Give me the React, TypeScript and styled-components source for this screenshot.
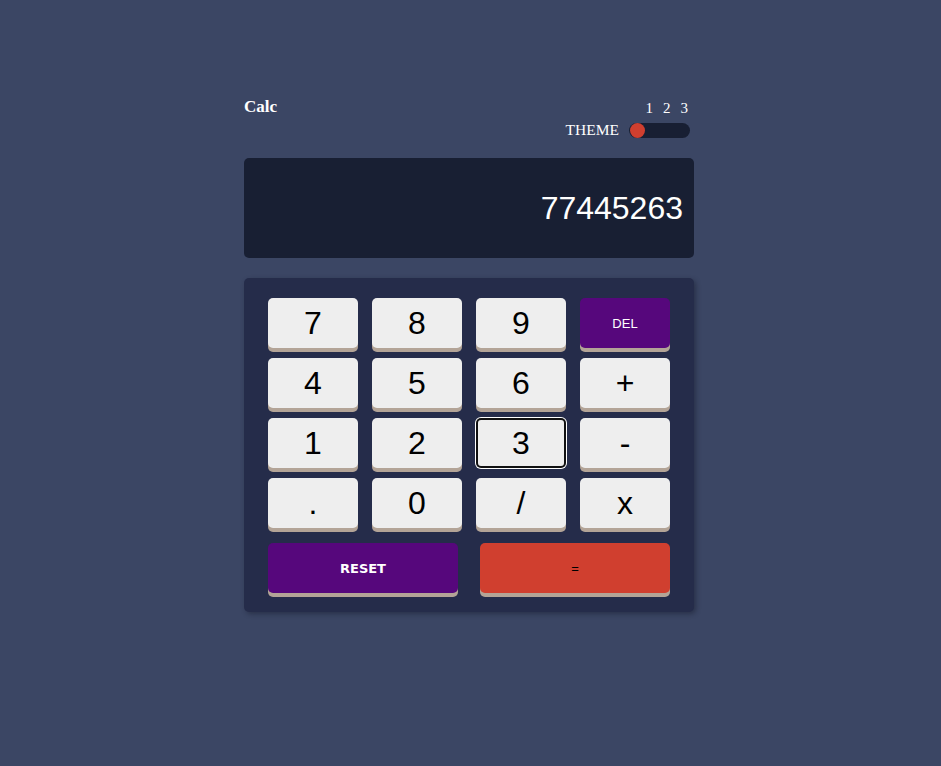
import React, { useState } from 'react';
import styled, { createGlobalStyle } from 'styled-components';

const GlobalStyle = createGlobalStyle`
  html, body {
    margin: 0;
    padding: 0;
    background-color: #3b4664;
    min-height: 100%;
  }
`;

const Page = styled.div`
  min-height: 766px;
  padding: 97px 3px 0 0;
  box-sizing: border-box;
`;

const CalcContainer = styled.div`
  width: 450px;
  margin: 0 auto;
`;

const Header = styled.div`
  display: flex;
  justify-content: space-between;
  align-items: flex-start;
  margin-bottom: 19px;
`;

const Title = styled.h1`
  margin: 0;
  font-family: 'Liberation Serif', 'Times New Roman', serif;
  font-size: 17px;
  font-weight: bold;
  color: #ffffff;
  line-height: 20px;
`;

const ThemeBox = styled.div`
  display: flex;
  flex-direction: column;
  align-items: flex-end;
  padding-right: 4px;
  font-family: 'Liberation Serif', 'Times New Roman', serif;
  color: #ffffff;
  font-size: 15px;
`;

const ThemeNumbers = styled.div`
  display: flex;
  gap: 10px;
  padding-right: 2px;
  line-height: 20px;
  margin-top: 1px;
`;

const ThemeRow = styled.div`
  display: flex;
  align-items: center;
  gap: 10px;
  margin-top: 3px;
`;

const ThemeLabel = styled.span`
  font-size: 15.5px;
`;

const Toggle = styled.div`
  width: 61px;
  height: 15px;
  border-radius: 8px;
  background-color: #181f33;
  display: flex;
  align-items: center;
  padding: 0 1px;
  box-sizing: border-box;
`;

const Knob = styled.div`
  width: 15px;
  height: 15px;
  border-radius: 50%;
  background-color: #d03f2f;
`;

const Display = styled.div`
  height: 100px;
  background-color: #181f33;
  border-radius: 5px;
  display: flex;
  align-items: center;
  justify-content: flex-end;
  padding: 0 11px;
  font-family: 'Liberation Sans', Arial, sans-serif;
  font-size: 32px;
  color: #ffffff;
  margin-bottom: 20px;
`;

const Keypad = styled.div`
  background-color: #252c4a;
  border-radius: 5px;
  padding: 20px 24px 19px;
  box-shadow: 2px 2px 5px rgba(20, 24, 40, 0.45);
`;

const KeyGrid = styled.div`
  display: grid;
  grid-template-columns: repeat(4, 90px);
  column-gap: 14px;
  row-gap: 10px;
`;

const BottomRow = styled.div`
  display: flex;
  justify-content: space-between;
  margin-top: 15px;
`;

type KeyVariant = 'number' | 'del' | 'reset' | 'equals';

const keyColors: Record<KeyVariant, { bg: string; color: string }> = {
  number: { bg: '#eeeeee', color: '#000000' },
  del: { bg: '#56077c', color: '#ffffff' },
  reset: { bg: '#56077c', color: '#ffffff' },
  equals: { bg: '#d03f2f', color: '#000000' },
};

const Key = styled.button<{ $variant: KeyVariant; $wide?: boolean; $focused?: boolean }>`
  width: ${(p) => (p.$wide ? '190px' : '90px')};
  height: 50px;
  border: none;
  border-radius: 5px;
  cursor: pointer;
  background-color: ${(p) => keyColors[p.$variant].bg};
  color: ${(p) => keyColors[p.$variant].color};
  box-shadow: ${(p) =>
    p.$focused ? '0 0 0 1px #ffffff, inset 0 0 0 2px #111111' : '0 4px 0 #b3a497'};
  font-family: ${(p) =>
    p.$variant === 'reset'
      ? "'DejaVu Sans', Verdana, sans-serif"
      : "'Liberation Sans', Arial, sans-serif"};
  font-size: ${(p) => (p.$variant === 'number' ? '32px' : '13px')};
  font-weight: ${(p) => (p.$variant === 'reset' ? 'bold' : 'normal')};
  padding: 0;
  outline: none;
  display: flex;
  align-items: center;
  justify-content: center;
`;

const keys: { label: string; variant: KeyVariant }[] = [
  { label: '7', variant: 'number' },
  { label: '8', variant: 'number' },
  { label: '9', variant: 'number' },
  { label: 'DEL', variant: 'del' },
  { label: '4', variant: 'number' },
  { label: '5', variant: 'number' },
  { label: '6', variant: 'number' },
  { label: '+', variant: 'number' },
  { label: '1', variant: 'number' },
  { label: '2', variant: 'number' },
  { label: '3', variant: 'number' },
  { label: '-', variant: 'number' },
  { label: '.', variant: 'number' },
  { label: '0', variant: 'number' },
  { label: '/', variant: 'number' },
  { label: 'x', variant: 'number' },
];

const App: React.FC = () => {
  const [value] = useState('77445263');
  const focusedKey = '3';

  return (
    <Page>
      <GlobalStyle />
      <CalcContainer>
        <Header>
          <Title>Calc</Title>
          <ThemeBox>
            <ThemeNumbers>
              <span>1</span>
              <span>2</span>
              <span>3</span>
            </ThemeNumbers>
            <ThemeRow>
              <ThemeLabel>THEME</ThemeLabel>
              <Toggle>
                <Knob />
              </Toggle>
            </ThemeRow>
          </ThemeBox>
        </Header>

        <Display>{value}</Display>

        <Keypad>
          <KeyGrid>
            {keys.map((k) => (
              <Key key={k.label} $variant={k.variant} $focused={k.label === focusedKey}>
                {k.label}
              </Key>
            ))}
          </KeyGrid>
          <BottomRow>
            <Key $variant="reset" $wide>
              RESET
            </Key>
            <Key $variant="equals" $wide>
              =
            </Key>
          </BottomRow>
        </Keypad>
      </CalcContainer>
    </Page>
  );
};

export default App;
